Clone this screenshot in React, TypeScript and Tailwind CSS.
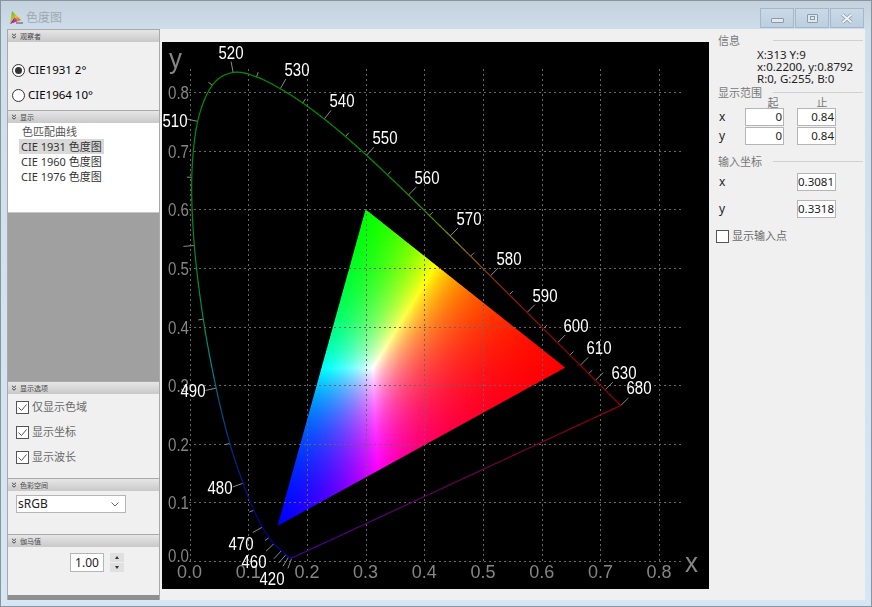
import { useEffect, useRef } from "react";

const sx = (x: number) => 189.5 + 587 * x - 162;
const sy = (y: number) => 561 - 586 * y - 42;

// [nm, x, y]
const LOCUS: [number, number, number][] = [
  [420, 0.1741, 0.005], [430, 0.1689, 0.0069], [440, 0.1644, 0.0109], [450, 0.1566, 0.0177],
  [460, 0.144, 0.0297], [465, 0.1355, 0.0399], [470, 0.1241, 0.0578], [475, 0.1096, 0.0868],
  [480, 0.0913, 0.1327], [485, 0.0687, 0.2007], [490, 0.0454, 0.295], [495, 0.0235, 0.4127],
  [500, 0.0082, 0.5384], [505, 0.0039, 0.6548], [510, 0.0139, 0.7502], [515, 0.0389, 0.812],
  [520, 0.0743, 0.8338], [525, 0.1142, 0.8262], [530, 0.1547, 0.8059], [535, 0.1929, 0.7816],
  [540, 0.2296, 0.7543], [545, 0.2658, 0.7243], [550, 0.3016, 0.6923], [555, 0.3373, 0.6589],
  [560, 0.3731, 0.6245], [565, 0.4087, 0.5896], [570, 0.4441, 0.5547], [575, 0.4788, 0.5202],
  [580, 0.5125, 0.4866], [585, 0.5448, 0.4544], [590, 0.5752, 0.4242], [595, 0.6029, 0.3965],
  [600, 0.627, 0.3725], [605, 0.6482, 0.3514], [610, 0.6658, 0.334], [615, 0.6801, 0.3197],
  [620, 0.6915, 0.3083], [630, 0.7079, 0.292], [680, 0.7347, 0.2653],
];

const LONG_TICKS = [420, 430, 440, 450, 460, 470, 480, 490, 500, 510, 520, 530, 540, 550, 560, 570, 580, 590, 600, 610, 620, 630, 680];

const LABELS: [string, number, number][] = [
  ["520", 231, 52], ["530", 297, 69.5], ["540", 342, 100.5], ["550", 385, 137.5], ["560", 427, 177.5],
  ["570", 469, 218], ["580", 509, 258], ["590", 545, 295], ["600", 576, 325], ["610", 599, 347],
  ["630", 624, 372], ["680", 639, 387], ["510", 175, 120], ["490", 193, 390], ["480", 220, 487],
  ["470", 241, 543], ["460", 254, 561], ["420", 272, 578],
];

function linearRgb(x: number, y: number): [number, number, number] {
  const X = x / y;
  const Z = (1 - x - y) / y;
  return [
    3.2406 * X - 1.5372 - 0.4986 * Z,
    -0.9689 * X + 1.8758 + 0.0415 * Z,
    0.0557 * X - 0.204 + 1.057 * Z,
  ];
}

function normalised(x: number, y: number): [number, number, number] {
  const c = linearRgb(x, y).map((v) => Math.max(0, v));
  const m = Math.max(c[0], c[1], c[2]) || 1;
  return [c[0] / m, c[1] / m, c[2] / m];
}

function lineColor(x: number, y: number) {
  const c = normalised(x, y).map((v) => Math.round(Math.pow(v, 1.25) * 140));
  return `rgb(${c[0]},${c[1]},${c[2]})`;
}

function catmull(p0: number, p1: number, p2: number, p3: number, t: number) {
  return 0.5 * (2 * p1 + (p2 - p0) * t + (2 * p0 - 5 * p1 + 4 * p2 - p3) * t * t + (3 * p1 - p0 - 3 * p2 + p3) * t * t * t);
}

function Gamut() {
  const ref = useRef<HTMLCanvasElement>(null);
  useEffect(() => {
    const cv = ref.current;
    if (!cv) return;
    const ctx = cv.getContext("2d");
    if (!ctx) return;
    const W = cv.width;
    const H = cv.height;
    const img = ctx.createImageData(W, H);
    const R: [number, number] = [sx(0.64), sy(0.33)];
    const G: [number, number] = [sx(0.3), sy(0.6)];
    const B: [number, number] = [sx(0.15), sy(0.06)];
    const side = (a: number[], b: number[], px: number, py: number) =>
      (b[0] - a[0]) * (py - a[1]) - (b[1] - a[1]) * (px - a[0]);
    for (let j = 0; j < H; j++) {
      for (let i = 0; i < W; i++) {
        let cover = 0;
        for (let a = 0; a < 3; a++) {
          for (let b = 0; b < 3; b++) {
            const px = i + (a + 0.5) / 3;
            const py = j + (b + 0.5) / 3;
            const s1 = side(R, G, px, py);
            const s2 = side(G, B, px, py);
            const s3 = side(B, R, px, py);
            if ((s1 >= 0 && s2 >= 0 && s3 >= 0) || (s1 <= 0 && s2 <= 0 && s3 <= 0)) cover++;
          }
        }
        if (!cover) continue;
        const x = (i + 0.5 - 27.5) / 587;
        const y = (519 - (j + 0.5)) / 586;
        const c = normalised(x, y);
        const k = (j * W + i) * 4;
        img.data[k] = Math.round(Math.pow(c[0], 1.25) * 255);
        img.data[k + 1] = Math.round(Math.pow(c[1], 1.25) * 255);
        img.data[k + 2] = Math.round(Math.pow(c[2], 1.25) * 255);
        img.data[k + 3] = Math.round((cover / 9) * 255);
      }
    }
    ctx.putImageData(img, 0, 0);
  }, []);
  return <canvas ref={ref} width={547} height={547} className="absolute left-0 top-0 h-[547px] w-[547px]" />;
}

function PlotOverlay() {
  const grid = [0, 1, 2, 3, 4, 5, 6, 7, 8];
  const segs: { x1: number; y1: number; x2: number; y2: number; c: string }[] = [];
  for (let i = 0; i < LOCUS.length - 1; i++) {
    const p0 = LOCUS[Math.max(0, i - 1)];
    const a = LOCUS[i];
    const b = LOCUS[i + 1];
    const p3 = LOCUS[Math.min(LOCUS.length - 1, i + 2)];
    const n = 6;
    for (let k = 0; k < n; k++) {
      const t1 = k / n;
      const t2 = (k + 1) / n;
      const xa = catmull(p0[1], a[1], b[1], p3[1], t1);
      const ya = catmull(p0[2], a[2], b[2], p3[2], t1);
      const xb = catmull(p0[1], a[1], b[1], p3[1], t2);
      const yb = catmull(p0[2], a[2], b[2], p3[2], t2);
      segs.push({ x1: sx(xa), y1: sy(ya), x2: sx(xb), y2: sy(yb), c: lineColor(xa, ya) });
    }
  }
  const first = LOCUS[0];
  const last = LOCUS[LOCUS.length - 1];
  const purple: typeof segs = [];
  for (let k = 0; k < 40; k++) {
    const t1 = k / 40;
    const t2 = (k + 1) / 40;
    const r = Math.round(70 + 70 * t1);
    const b = Math.round(140 * (1 - t1) + 10);
    purple.push({
      x1: sx(first[1] + (last[1] - first[1]) * t1),
      y1: sy(first[2] + (last[2] - first[2]) * t1),
      x2: sx(first[1] + (last[1] - first[1]) * t2),
      y2: sy(first[2] + (last[2] - first[2]) * t2),
      c: `rgb(${r},0,${b})`,
    });
  }
  const ticks = LOCUS.map((p, i) => {
    const prev = LOCUS[Math.max(0, i - 1)];
    const next = LOCUS[Math.min(LOCUS.length - 1, i + 1)];
    let dx = sx(next[1]) - sx(prev[1]);
    let dy = sy(next[2]) - sy(prev[2]);
    const len = Math.hypot(dx, dy) || 1;
    dx /= len;
    dy /= len;
    // outward normal for a curve going clockwise on screen from the bottom
    const nx = dy;
    const ny = -dx;
    const L = LONG_TICKS.includes(p[0]) ? 11 : 5;
    return { x1: sx(p[1]), y1: sy(p[2]), x2: sx(p[1]) + nx * L, y2: sy(p[2]) + ny * L, nm: p[0] };
  });

  return (
    <svg width={547} height={547} className="absolute left-0 top-0">
      {grid.map((g) => (
        <g key={g} stroke="#666666" strokeWidth={1} strokeDasharray="2 3">
          <line x1={Math.round(sx(g / 10)) + 0.5} x2={Math.round(sx(g / 10)) + 0.5} y1={27} y2={519} />
          <line x1={27} x2={520} y1={Math.round(sy(g / 10)) + 0.5} y2={Math.round(sy(g / 10)) + 0.5} />
        </g>
      ))}
      {ticks.map((t) => (
        <line key={t.nm} x1={t.x1} y1={t.y1} x2={t.x2} y2={t.y2} stroke="#8c8c8c" strokeWidth={1} />
      ))}
      {[...segs, ...purple].map((s, i) => (
        <line key={i} x1={s.x1} y1={s.y1} x2={s.x2} y2={s.y2} stroke={s.c} strokeWidth={1.2} strokeLinecap="round" />
      ))}
      <g fontFamily="'Liberation Sans', sans-serif" fontSize={18} fill="#858585">
        {grid.map((g) => (
          <text key={g} x={sx(g / 10)} y={536} textAnchor="middle" textLength={25} lengthAdjust="spacingAndGlyphs">
            {`0.${g}`}
          </text>
        ))}
        {grid.map((g) => (
          <text key={g} x={6} y={g === 0 ? 520 : sy(g / 10) + 7} textLength={21} lengthAdjust="spacingAndGlyphs">
            {`0.${g}`}
          </text>
        ))}
        <text x={7} y={26} fontSize={28} textLength={13} lengthAdjust="spacingAndGlyphs">y</text>
        <text x={523} y={530} fontSize={28} textLength={13} lengthAdjust="spacingAndGlyphs">x</text>
      </g>
      <g fontFamily="'Liberation Sans', sans-serif" fontSize={18} fill="#ffffff" textAnchor="middle">
        {LABELS.map(([t, x, y]) => (
          <text key={t} x={x - 162} y={y - 42 + 6.5} textLength={25} lengthAdjust="spacingAndGlyphs">
            {t}
          </text>
        ))}
      </g>
    </svg>
  );
}

function DockHeader({ title }: { title: string }) {
  return (
    <div className="flex h-[13px] shrink-0 items-center gap-[3px] border-t border-[#a9a9a9] bg-gradient-to-b from-[#e6e6e6] to-[#c9c9c9] pl-[3px] text-[7px] leading-none text-[#4a4a4a]">
      <svg width="6" height="6" viewBox="0 0 6 6" fill="none" stroke="#333" strokeWidth="0.9">
        <path d="M1 0.8 L3 2.6 L5 0.8 M1 3.4 L3 5.2 L5 3.4" />
      </svg>
      <span>{title}</span>
    </div>
  );
}

function Radio({ label, checked }: { label: string; checked?: boolean }) {
  return (
    <div className="flex h-[14px] items-center gap-[3px] pl-[4px] text-[11.5px] text-black">
      <span className="flex h-[13px] w-[13px] items-center justify-center rounded-full border border-[#333] bg-white">
        {checked && <span className="h-[7px] w-[7px] rounded-full bg-[#333]" />}
      </span>
      <span>{label}</span>
    </div>
  );
}

function Check({ label, checked }: { label: string; checked?: boolean }) {
  return (
    <div className="flex h-[13px] items-center gap-[3px] text-[#6a6a6a]">
      <span className="flex h-[13px] w-[13px] shrink-0 items-center justify-center border border-[#555] bg-white">
        {checked && (
          <svg width="11" height="11" viewBox="0 0 11 11" fill="none" stroke="#555" strokeWidth="1">
            <path d="M1.5 5.5 L4.5 8.5 L9.5 2.5" />
          </svg>
        )}
      </span>
      <span className="text-[11px]">{label}</span>
    </div>
  );
}

function Field({ value, className }: { value: string; className: string }) {
  return (
    <div className={`flex h-[18px] w-[39px] items-center justify-end border border-[#b5b5b5] bg-white pr-[1px] text-[11.5px] text-[#222] ${className}`}>
      {value}
    </div>
  );
}

function GroupTitle({ title }: { title: string }) {
  return (
    <div className="flex items-center text-[11px] leading-[14px] text-[#777]">
      <span className="w-[55px] shrink-0">{title}</span>
      <span className="h-[2px] flex-1 border-t border-[#d0d0d0]" />
    </div>
  );
}

export default function App() {
  return (
    <div
      className="flex h-[607px] w-[872px] flex-col overflow-hidden border border-[#8a949e] bg-[linear-gradient(#c4d2de_0,#cfdeeb_30px,#d7e6f4_100%)] px-[6px] pb-[6px] text-[12px]"
      style={{ fontFamily: "'Noto Sans', 'Noto Sans CJK SC', sans-serif" }}
    >
      {/* title bar */}
      <div className="flex h-[28px] shrink-0 items-start justify-between">
        <div className="flex items-center gap-[3px] pl-[3px] pt-[10px]">
          <svg width="13" height="14" viewBox="0 0 13 14">
            <defs>
              <linearGradient id="ic" x1="0" y1="0" x2="1" y2="1">
                <stop offset="0" stopColor="#22c422" />
                <stop offset="0.5" stopColor="#e8c020" />
                <stop offset="1" stopColor="#e02020" />
              </linearGradient>
            </defs>
            <polygon points="2,0 11,9 0,13" fill="url(#ic)" />
            <polygon points="0,13 5,6 4,11" fill="#2040e0" />
            <polygon points="1,12.5 6,7 7,10.5" fill="#e020c0" />
            <rect x="6" y="11" width="7" height="2" fill="#8a949e" />
          </svg>
          <span className="text-[12px] leading-none text-[#a0a8b0]">色度图</span>
        </div>
        <div className="mr-[1px] flex gap-[1px] pt-[7px]">
          {["min", "max", "close"].map((k) => (
            <div key={k} className="flex h-[20px] w-[34px] items-center justify-center border border-[#a3b8cb] bg-gradient-to-b from-[#cbd9e6] to-[#bccfe0]">
              {k === "min" && <span className="mt-[4px] h-[5px] w-[13px] rounded-[1px] border border-[#8a9aa8] bg-[#e2e8ee]" />}
              {k === "max" && (
                <span className="flex h-[9px] w-[11px] items-center justify-center rounded-[1px] border border-[#8a9aa8] bg-[#dfe7ee]">
                  <span className="h-[4px] w-[5px] border border-[#8a9aa8]" />
                </span>
              )}
              {k === "close" && (
                <svg width="14" height="11" viewBox="0 0 14 11" fill="none">
                  <path d="M2.5 1.5 L11.5 9.5 M11.5 1.5 L2.5 9.5" stroke="#8a9aa8" strokeWidth="3.6" />
                  <path d="M2.5 1.5 L11.5 9.5 M11.5 1.5 L2.5 9.5" stroke="#eef2f6" strokeWidth="2" />
                </svg>
              )}
            </div>
          ))}
        </div>
      </div>

      {/* client area */}
      <div className="flex min-h-0 flex-1 bg-[#f0f0f0]">
        {/* left dock */}
        <div className="flex w-[153px] shrink-0 flex-col border-x border-[#a9a9a9] bg-[#a0a0a0]">
          <DockHeader title="观察者" />
          <div className="flex h-[68px] flex-col gap-[11px] bg-[#f0f0f0] pt-[21px]">
            <Radio label="CIE1931 2°" checked />
            <Radio label="CIE1964 10°" />
          </div>
          <DockHeader title="显示" />
          <div className="h-[90px] border-b border-[#c8c8c8] bg-white pl-[11px] pt-[1px] text-[11px] leading-[15px] text-[#333]">
            <div className="pl-[3px] text-[#555]">色匹配曲线</div>
            <div className="w-[85px] bg-[#d9d9d9] pl-[2px]">CIE 1931 色度图</div>
            <div className="pl-[2px]">CIE 1960 色度图</div>
            <div className="pl-[2px]">CIE 1976 色度图</div>
          </div>
          <div className="flex-1" />
          <DockHeader title="显示选项" />
          <div className="flex h-[84px] flex-col gap-[12px] bg-[#f0f0f0] pl-[8px] pt-[7px]">
            <Check label="仅显示色域" checked />
            <Check label="显示坐标" checked />
            <Check label="显示波长" checked />
          </div>
          <DockHeader title="色彩空间" />
          <div className="h-[43px] bg-[#f0f0f0] pl-[8px] pt-[4px]">
            <div className="flex h-[18px] w-[110px] items-center justify-between border border-[#b5b5b5] bg-white pl-[1px] pr-[6px] text-[12px] text-[#222]">
              <span>sRGB</span>
              <svg width="8" height="5" viewBox="0 0 8 5" fill="none" stroke="#666" strokeWidth="1">
                <path d="M0.5 0.5 L4 4 L7.5 0.5" />
              </svg>
            </div>
          </div>
          <DockHeader title="伽马值" />
          <div className="flex h-[48px] items-start gap-[6px] bg-[#f0f0f0] pl-[62px] pt-[6px]">
            <div className="flex h-[19px] w-[34px] items-center justify-center border border-[#b5b5b5] bg-white text-[12px] text-[#222]">1.00</div>
            <div className="flex w-[14px] flex-col gap-[1px]">
              <div className="flex h-[9px] items-center justify-center bg-[#e0e0e0]">
                <span className="border-x-[2.5px] border-b-[3px] border-x-transparent border-b-[#333]" />
              </div>
              <div className="flex h-[9px] items-center justify-center bg-[#e0e0e0]">
                <span className="border-x-[2.5px] border-t-[3px] border-x-transparent border-t-[#333]" />
              </div>
            </div>
          </div>
          <div className="h-[5px] shrink-0 bg-[#8f8f8f]" />
        </div>

        {/* plot */}
        <div className="ml-[2px] mt-[13px] h-[547px] w-[547px] shrink-0 self-start bg-black">
          <div className="relative h-full w-full">
            <Gamut />
            <PlotOverlay />
          </div>
        </div>

        {/* right panel */}
        <div className="min-w-0 flex-1 pl-[9px] pr-[2px] pt-[5px] text-[#222]">
          <GroupTitle title="信息" />
          <div className="pl-[39px] text-[11.5px] leading-[12px]">
            <div className="mt-[1px]">X:313 Y:9</div>
            <div>x:0.2200, y:0.8792</div>
            <div>R:0, G:255, B:0</div>
          </div>
          <div className="mt-[1px]"><GroupTitle title="显示范围" /></div>
          <div className="-mt-[2px] flex pl-[29px] text-[11px] leading-[10px] text-[#777]">
            <span className="w-[52px] text-center">起</span>
            <span className="w-[46px] text-center">止</span>
          </div>
          <div className="flex items-center">
            <span className="w-[27px] pl-[1px] text-[12px]">x</span>
            <Field value="0" className="" />
            <Field value="0.84" className="ml-[13px]" />
          </div>
          <div className="mt-[1px] flex items-center">
            <span className="w-[27px] pl-[1px] text-[12px]">y</span>
            <Field value="0" className="" />
            <Field value="0.84" className="ml-[13px]" />
          </div>
          <div className="mt-[10px]"><GroupTitle title="输入坐标" /></div>
          <div className="mt-[4px] flex items-center">
            <span className="w-[79px] pl-[1px] text-[12px]">x</span>
            <Field value="0.3081" className="" />
          </div>
          <div className="mt-[9px] flex items-center">
            <span className="w-[79px] pl-[1px] text-[12px]">y</span>
            <Field value="0.3318" className="" />
          </div>
          <div className="mt-[12px] -ml-[2px]">
            <Check label="显示输入点" />
          </div>
        </div>
      </div>
    </div>
  );
}
